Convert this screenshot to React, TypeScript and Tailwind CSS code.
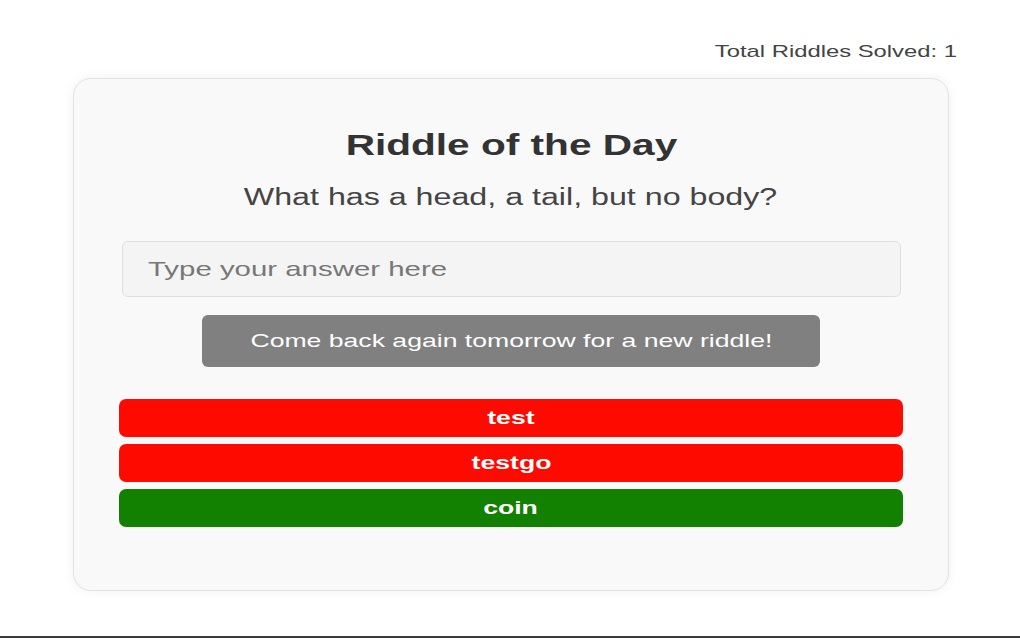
const bars = [
  { label: "test", color: "bg-[#ff0a00]" },
  { label: "testgo", color: "bg-[#ff0a00]" },
  { label: "coin", color: "bg-[#128000]" },
];

export default function App() {
  return (
    <div className="h-[638px] bg-white border-b-2 border-[#3a3a3a] font-['Liberation_Sans',Arial,sans-serif]">
      {/* Solved counter */}
      <div className="flex justify-end pt-[40px] pr-[63px]">
        <span className="inline-block origin-right scale-x-[1.4] text-[17px] leading-[24px] text-[#444]">
          Total Riddles Solved: 1
        </span>
      </div>

      {/* Riddle card */}
      <div className="ml-[73px] mt-[14px] flex h-[513px] w-[876px] flex-col items-center rounded-[18px] border border-[#e2e2e2] bg-[#f9f9f9] px-[45px] pt-[48px] shadow-[0_0_12px_rgba(0,0,0,0.06)]">
        <h1 className="text-[29px] font-bold leading-[36px] text-[#333]">
          <span className="inline-block scale-x-[1.4]">Riddle of the Day</span>
        </h1>
        <p className="mt-[19px] text-[23px] leading-[30px] text-[#444]">
          <span className="inline-block scale-x-[1.4]">What has a head, a tail, but no body?</span>
        </p>

        <div className="mt-[29px] flex h-[56px] w-[779px] items-center rounded-[6px] border border-[#dedede] bg-[#f4f4f4] px-[25px]">
          <input
            type="text"
            placeholder="Type your answer here"
            className="w-[519px] origin-left scale-x-[1.4] bg-transparent text-[21px] text-[#333] outline-none placeholder:text-[#777]"
          />
        </div>

        <button className="mt-[18px] flex h-[52px] w-[618px] items-center justify-center rounded-[6px] bg-[#808080] text-[19px] text-white">
          <span className="inline-block scale-x-[1.4]">Come back again tomorrow for a new riddle!</span>
        </button>

        <div className="mt-[32px] flex w-full flex-col gap-[7px]">
          {bars.map((b) => (
            <div
              key={b.label}
              className={`flex h-[38px] items-center justify-center rounded-[7px] ${b.color} text-[19px] font-bold text-white`}
            >
              <span className="inline-block scale-x-[1.4]">{b.label}</span>
            </div>
          ))}
        </div>
      </div>
    </div>
  );
}
